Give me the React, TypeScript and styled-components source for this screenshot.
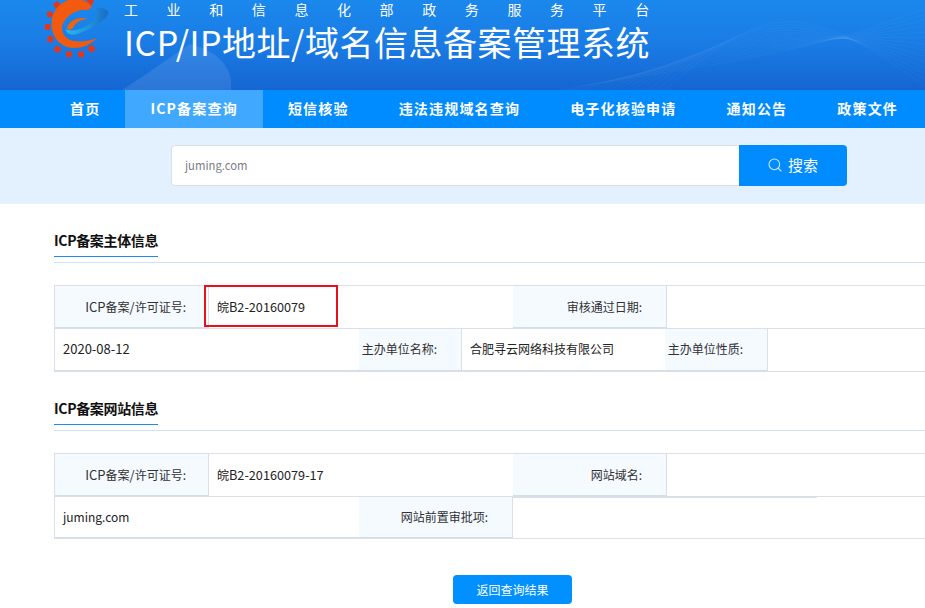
import React from "react";
import styled, { createGlobalStyle } from "styled-components";
import { Search } from "lucide-react";

const Global = createGlobalStyle`
  html, body { margin: 0; padding: 0; background: #fff; overflow: hidden; }
  body { font-family: "Noto Sans CJK SC", "Open Sans", sans-serif; color: #222; }
  * { box-sizing: border-box; }
`;

const Page = styled.div`
  width: 925px;
  height: 608px;
  overflow: hidden;
`;

const Header = styled.header`
  position: relative;
  height: 90px;
  display: flex;
  padding-left: 43px;
  overflow: hidden;
  background: linear-gradient(180deg, #1a88ec 0%, #1a7de6 45%, #1566d2 100%);
`;

const Decor = styled.svg`
  position: absolute;
  left: 0;
  top: 0;
`;

const Logo = styled.svg`
  position: relative;
  flex: none;
  margin-top: -4px;
`;

const Titles = styled.div`
  position: relative;
  margin-left: 13px;
  margin-top: -1px;
  color: #fff;
  display: flex;
  flex-direction: column;
`;

const Sub = styled.div`
  font-size: 14px;
  line-height: 20px;
  letter-spacing: 28.6px;
  white-space: nowrap;
`;

const Title = styled.h1`
  margin: -1px 0 0;
  font-size: 34px;
  font-weight: 400;
  line-height: 48px;
  letter-spacing: 0.5px;
  white-space: nowrap;
`;

const Nav = styled.nav`
  height: 38px;
  display: flex;
  padding-left: 45px;
  background: #008cff;
`;

const NavItem = styled.a<{ $active?: boolean }>`
  padding: 0 25px;
  line-height: 37px;
  color: #fff;
  font-size: 14px;
  font-weight: 700;
  letter-spacing: 1.19px;
  white-space: nowrap;
  background: ${(p) => (p.$active ? "#40a9ff" : "transparent")};
`;

const SearchBand = styled.section`
  height: 76px;
  padding: 17px 0 0 171px;
  display: flex;
  align-items: flex-start;
  background: #e3f1ff;
`;

const SearchInput = styled.div`
  width: 568px;
  height: 41px;
  padding-left: 13px;
  background: #fff;
  border: 1px solid #dcdfe6;
  border-right: 0;
  border-radius: 4px 0 0 4px;
  font-size: 11.3px;
  line-height: 39px;
  color: #7a7d85;
`;

const SearchButton = styled.button`
  width: 108px;
  height: 41px;
  display: flex;
  align-items: center;
  justify-content: center;
  gap: 5px;
  padding: 0 1px 2px 0;
  border: 0;
  border-radius: 0 4px 4px 0;
  background: #008cff;
  color: #fff;
  font-family: inherit;
  font-size: 15px;
`;

const Content = styled.main`
  padding-left: 54px;
`;

const SectionHead = styled.div<{ $top: number }>`
  margin-top: ${(p) => p.$top}px;
  height: 31px;
  border-bottom: 1px solid #cfdfee;
`;

const SectionTitle = styled.h2`
  width: fit-content;
  margin: 0;
  height: 25px;
  font-size: 14px;
  font-weight: 700;
  line-height: 16px;
  letter-spacing: -0.33px;
  color: #111;
  border-bottom: 1px solid #1f8ae8;
  white-space: nowrap;
`;

const InfoTable = styled.div`
  position: relative;
  margin-top: 22px;
  width: 900px;
  border-top: 1px solid #dcdfe6;
  border-left: 1px solid #dcdfe6;
  border-bottom: 1px solid #dcdfe6;
`;

const Row = styled.div<{ $h?: number }>`
  display: flex;
  height: ${(p) => p.$h ?? 42}px;
  line-height: 41px;
  & + & {
    border-top: 1px solid #dcdfe6;
    line-height: 39px;
  }
`;

const Label = styled.div<{ $w: number; $pad?: number }>`
  flex: none;
  width: ${(p) => p.$w}px;
  padding-right: ${(p) => p.$pad ?? 24}px;
  text-align: right;
  font-size: 12px;
  white-space: nowrap;
  background: #f5faff;
  border-right: 1px solid #dcdfe6;
  border-bottom: 1px solid #cfdfee;
  color: #303133;
`;

const Value = styled.div<{ $w?: number; $line?: boolean; $topline?: boolean }>`
  flex: ${(p) => (p.$w ? "none" : "1")};
  width: ${(p) => (p.$w ? `${p.$w}px` : "auto")};
  padding-left: 8px;
  font-size: 12px;
  white-space: nowrap;
  color: #222;
  border-bottom: 1px solid ${(p) => (p.$line ? "#cfdfee" : "transparent")};
  box-shadow: ${(p) => (p.$topline ? "inset 0 1px 0 #d4e0ec" : "none")};
`;

const Latin = styled.span<{ $size?: number }>`
  font-size: ${(p) => p.$size ?? 13}px;
`;

const Highlight = styled.div`
  position: absolute;
  left: 149px;
  top: -1px;
  width: 134px;
  height: 42px;
  border: 2px solid #e8101a;
  pointer-events: none;
`;

const Actions = styled.div`
  display: flex;
  justify-content: center;
  margin-top: 36px;
  padding-left: 46px;
  width: 871px;
`;

const BackButton = styled.button`
  width: 119px;
  height: 29px;
  padding: 0;
  border: 0;
  border-radius: 4px;
  background: #0090ff;
  color: #fff;
  font-family: inherit;
  font-size: 12px;
`;

const waves = Array.from({ length: 14 }, (_, i) => i);

export default function App() {
  return (
    <Page>
      <Global />
      <Header>
        <Decor width="925" height="90" viewBox="0 0 925 90" aria-hidden="true">
          <path d="M122 90 C150 72 172 56 190 44 C215 50 234 66 231 90 Z" fill="#fff" opacity="0.1" />
          {waves.map((i) => (
            <path
              key={i}
              d={`M${560 + i * 8} 90 C ${660 + i * 8} ${70 - i * 5} 800 ${60 - i * 5} 925 ${8 + i * 6}`}
              fill="none"
              stroke="#fff"
              strokeWidth="1"
              opacity="0.035"
            />
          ))}
        </Decor>
        <Logo width="68" height="66" viewBox="43 -4 68 66" aria-hidden="true">
          <defs>
            <linearGradient id="swoosh" x1="0" y1="0" x2="1" y2="0">
              <stop offset="0" stopColor="#2cb6ea" />
              <stop offset="0.55" stopColor="#1f94dc" />
              <stop offset="1" stopColor="#1a6cc2" />
            </linearGradient>
          </defs>
          <g fill="#e2371d">
            <rect x="54" y="2" width="6" height="6" transform="rotate(-35 57 5)" />
            <rect x="47" y="11.5" width="5.5" height="5.5" transform="rotate(-15 50 14)" />
            <rect x="45" y="24" width="5" height="6" />
            <rect x="47.5" y="36" width="5.5" height="6" transform="rotate(15 50 39)" />
            <rect x="54.5" y="46" width="6" height="6" transform="rotate(30 57 49)" />
            <rect x="66" y="51.5" width="6" height="5.5" />
            <rect x="78" y="51.5" width="6" height="5.5" />
            <rect x="88.5" y="46" width="6" height="6" transform="rotate(-35 91 49)" />
            <rect x="87" y="-1" width="6" height="6" transform="rotate(30 90 2)" />
            <rect x="72" y="-4" width="6" height="5" />
          </g>
          <path
            d="M97 38 C90 45 82 48 74 48 C61 48 51.5 37 51.5 24 C51.5 10 62 -1 75 -1 C83 -1 89 2 92 7 L88 10 C82 9 75 11 70 15 C65 19 62 24 62 28 C62 35 67 40 74 41 C82 42 90 41 97 38 Z"
            fill="#f25a10"
          />
          <path
            d="M66 29 C66 35 73 36 80 33 C92 29 106 20 108 14 C109 9 102 7 95 8 C101 13 97 19 88 25 C80 30 71 32 66 29 Z"
            fill="url(#swoosh)"
          />
          <path d="M67 28 C69 21 78 16 88 19 C81 19 75 23 73 28 C71 30 68 30 67 28 Z" fill="#f0620f" />
        </Logo>
        <Titles>
          <Sub>工业和信息化部政务服务平台</Sub>
          <Title>ICP/IP地址/域名信息备案管理系统</Title>
        </Titles>
      </Header>
      <Nav>
        <NavItem>首页</NavItem>
        <NavItem $active>ICP备案查询</NavItem>
        <NavItem>短信核验</NavItem>
        <NavItem>违法违规域名查询</NavItem>
        <NavItem>电子化核验申请</NavItem>
        <NavItem>通知公告</NavItem>
        <NavItem>政策文件</NavItem>
      </Nav>
      <SearchBand>
        <SearchInput>juming.com</SearchInput>
        <SearchButton>
          <Search size={16} strokeWidth={1.6} color="#cfe8ff" />
          搜索
        </SearchButton>
      </SearchBand>
      <Content>
        <SectionHead $top={28}>
          <SectionTitle>ICP备案主体信息</SectionTitle>
        </SectionHead>
        <InfoTable>
          <Row>
            <Label $w={154} $pad={22}>
              <Latin>ICP</Latin>备案<Latin>/</Latin>许可证号:
            </Label>
            <Value $w={304}>
              皖<Latin $size={12.7}>B2-20160079</Latin>
            </Value>
            <Label $w={154}>审核通过日期:</Label>
            <Value />
          </Row>
          <Row $h={43}>
            <Value $w={304} $line>
              <Latin>2020-08-12</Latin>
            </Value>
            <Label $w={103}>主办单位名称:</Label>
            <Value $w={203} $line>
              合肥寻云网络科技有限公司
            </Value>
            <Label $w={103}>主办单位性质:</Label>
            <Value />
          </Row>
          <Highlight />
        </InfoTable>
        <SectionHead $top={28}>
          <SectionTitle>ICP备案网站信息</SectionTitle>
        </SectionHead>
        <InfoTable>
          <Row>
            <Label $w={154} $pad={22}>
              <Latin>ICP</Latin>备案<Latin>/</Latin>许可证号:
            </Label>
            <Value $w={304}>
              皖<Latin $size={12.7}>B2-20160079-17</Latin>
            </Value>
            <Label $w={154}>网站域名:</Label>
            <Value />
          </Row>
          <Row>
            <Value $w={304} $line>
              <Latin $size={12}>juming.com</Latin>
            </Value>
            <Label $w={154}>网站前置审批项:</Label>
            <Value $w={304} $topline />
            <Value />
          </Row>
        </InfoTable>
        <Actions>
          <BackButton>返回查询结果</BackButton>
        </Actions>
      </Content>
    </Page>
  );
}
